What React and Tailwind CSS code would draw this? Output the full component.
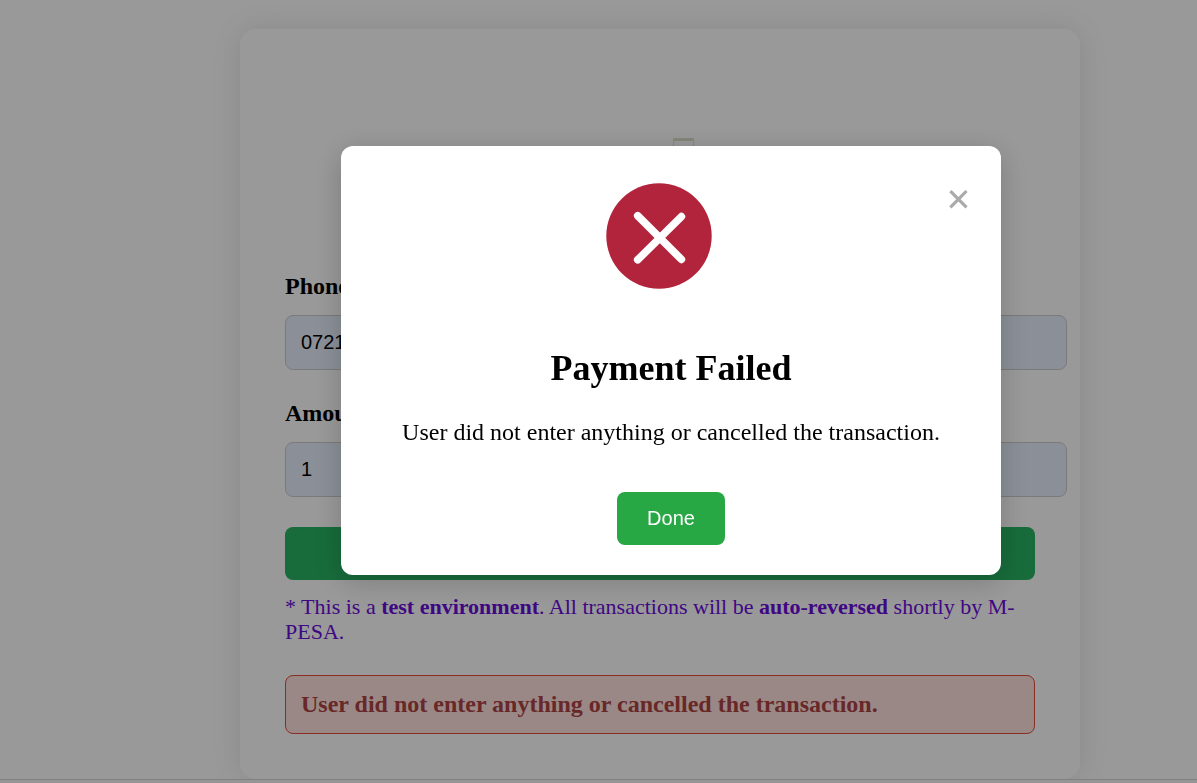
import React, { useState } from 'react';

const RESULT_MESSAGE = 'User did not enter anything or cancelled the transaction.';

const INPUT_CLASS =
  'block box-content w-full h-[23px] p-[15px] rounded-lg border border-[#cccccc] bg-[#e8f0fe] font-["Liberation_Sans",Arial,sans-serif] text-xl leading-[23px] text-black';

function PhoneLogo() {
  return (
    <svg className="block w-[180px] h-[180px] mx-auto mb-[19px]" viewBox="0 0 180 180" fill="none" aria-hidden="true">
      <rect x="103.5" y="65" width="20" height="52" rx="2" stroke="#e4e4d8" strokeWidth="1.2" />
      <path d="M104.5 65.5h18" stroke="#dedecb" strokeWidth="3" strokeLinecap="round" />
    </svg>
  );
}

function FailedIcon() {
  return (
    <svg className="block w-[150px] h-[150px] mx-auto" viewBox="0 0 150 150" fill="none" aria-hidden="true">
      <circle cx="63" cy="60" r="52.7" fill="#b2243c" />
      <path
        d="M41.7 39.7 85.4 83.4M85.4 40.6 41.7 83.8"
        stroke="#ffffff"
        strokeWidth="7.6"
        strokeLinecap="round"
      />
    </svg>
  );
}

function PaymentForm() {
  const [phone, setPhone] = useState('0721');
  const [amount, setAmount] = useState('1');

  return (
    <form
      className="w-full max-w-[840px] rounded-2xl bg-white p-[45px] shadow-[0_0_30px_rgba(0,0,0,0.1)]"
      onSubmit={(event) => event.preventDefault()}
    >
      <PhoneLogo />
      <label htmlFor="phone" className="block mb-[15px] font-bold">Phone</label>
      <input
        id="phone"
        type="tel"
        value={phone}
        onChange={(event) => setPhone(event.target.value)}
        className={INPUT_CLASS}
      />
      <label htmlFor="amount" className="block mt-[30px] mb-[15px] font-bold">Amount</label>
      <input
        id="amount"
        type="text"
        inputMode="numeric"
        value={amount}
        onChange={(event) => setAmount(event.target.value)}
        className={INPUT_CLASS}
      />
      <button
        type="submit"
        aria-label="Submit"
        className="block w-full h-[53px] mt-[30px] rounded-lg bg-[#28b463]"
      />
      <p className="mt-[14px] text-[22px] leading-[25px] text-[#6a0dda]">
        * This is a <strong>test environment</strong>. All transactions will be{' '}
        <strong>auto-reversed</strong> shortly by M-PESA.
      </p>
      <div className="mt-[31px] rounded-lg border border-[#e74c3c] bg-[#ffe3e0] p-[15px] font-bold text-[#b04444]">
        {RESULT_MESSAGE}
      </div>
    </form>
  );
}

function ResultModal({ onClose }) {
  return (
    <div className="fixed inset-0 flex items-start justify-center bg-black/40 pl-[145px] pt-[146px]">
      <div
        role="dialog"
        aria-modal="true"
        aria-labelledby="result-title"
        className="relative w-full max-w-[660px] rounded-xl bg-white p-[30px] text-center shadow-[0_6px_30px_rgba(0,0,0,0.2)]"
      >
        <button
          type="button"
          onClick={onClose}
          aria-label="Close"
          className="absolute top-[30px] right-[30px] text-[44px] leading-[48px] text-[#aaaaaa] font-bold cursor-pointer"
        >
          ×
        </button>
        <FailedIcon />
        <h2 id="result-title" className="mt-[22px] text-4xl leading-[41px] font-bold">Payment Failed</h2>
        <p className="mt-[30px]">{RESULT_MESSAGE}</p>
        <button
          type="button"
          onClick={onClose}
          className='mt-[46px] block mx-auto rounded-lg bg-[#28a745] px-[30px] py-[15px] font-["Liberation_Sans",Arial,sans-serif] text-xl leading-[23px] text-white cursor-pointer'
        >
          Done
        </button>
      </div>
    </div>
  );
}

export default function App() {
  const [showResult, setShowResult] = useState(true);

  return (
    <div className='min-h-screen overflow-hidden bg-white font-["Liberation_Serif","Times_New_Roman",serif] text-2xl leading-[27px] text-black'>
      <main className="flex justify-center pt-[29px] pl-[123px]">
        <PaymentForm />
      </main>
      <footer className="relative h-1 border-t border-[#d5d5d5] bg-[#f8f8f8]" />
      {showResult && <ResultModal onClose={() => setShowResult(false)} />}
    </div>
  );
}
